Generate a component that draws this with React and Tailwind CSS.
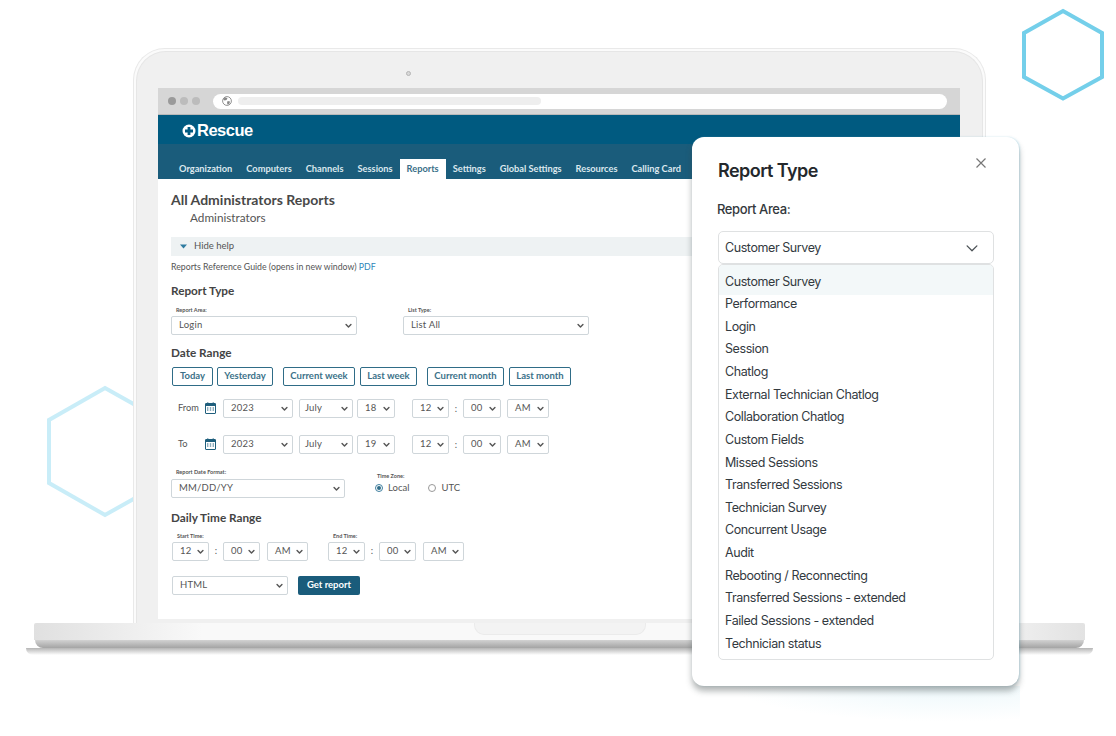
import React from "react";

const tabs = ["Organization", "Computers", "Channels", "Sessions", "Reports", "Settings", "Global Settings", "Resources", "Calling Card"];
const items = ["Customer Survey", "Performance", "Login", "Session", "Chatlog", "External Technician Chatlog", "Collaboration Chatlog", "Custom Fields", "Missed Sessions", "Transferred Sessions", "Technician Survey", "Concurrent Usage", "Audit", "Rebooting / Reconnecting", "Transferred Sessions - extended", "Failed Sessions - extended", "Technician status"];

function Chev({ size = 7, color = "#555", sw = 2 }) {
  return (
    <svg width={size} height={size} viewBox="0 0 10 10" fill="none" className="shrink-0">
      <path d="M1.5 3.5 L5 7 L8.5 3.5" stroke={color} strokeWidth={sw} strokeLinecap="round" strokeLinejoin="round" />
    </svg>
  );
}

function Sel({ children, className = "" }) {
  return (
    <div className={"h-[19px] flex items-center justify-between pl-[7px] pr-[4px] border border-[#cfd6da] rounded-[2px] bg-white text-[9.5px] tracking-[0.2px] text-[#555] shrink-0 " + className}>
      <span>{children}</span>
      <Chev />
    </div>
  );
}

function Btn({ children, className = "" }) {
  return (
    <div className={"h-[19px] flex items-center justify-center border border-[#2f6c87] rounded-[2px] text-[9.5px] font-bold text-[#3b7189] shrink-0 " + className}>{children}</div>
  );
}

function H({ children, className = "" }) {
  return <div className={"text-[11.75px] leading-[14px] font-bold text-[#444] " + className}>{children}</div>;
}

function Tiny({ children, className = "" }) {
  return <div className={"text-[5.5px] leading-[8px] font-bold text-[#555] " + className}>{children}</div>;
}

function Cal() {
  return (
    <svg width="11" height="12" viewBox="0 0 11 12" fill="none" className="shrink-0">
      <rect x="0.5" y="1.5" width="10" height="10" rx="0.5" stroke="#1f5f7d" />
      <rect x="0.5" y="1.5" width="10" height="2.5" fill="#1f5f7d" />
      <path d="M2.8 0.3v2M8.2 0.3v2" stroke="#1f5f7d" />
      <path d="M2 6h1.4M4.8 6h1.4M7.6 6h1.4M2 8h1.4M4.8 8h1.4M7.6 8h1.4" stroke="#1f5f7d" />
    </svg>
  );
}

function DateRow({ label, year, month, day, className = "" }) {
  return (
    <div className={"flex items-center text-[#555] text-[9.25px] pl-[7px] " + className}>
      <span className="w-[27px] -mt-[2px]">{label}</span>
      <span className="-mt-[2px]"><Cal /></span>
      <Sel className="w-[70px] ml-[7px]">{year}</Sel>
      <Sel className="w-[54px] ml-[6px] !pl-[5px]">{month}</Sel>
      <Sel className="w-[38px] ml-[4px]">{day}</Sel>
      <Sel className="w-[37px] ml-[17px]">12</Sel>
      <span className="w-[14px] text-center">:</span>
      <Sel className="w-[38px]">00</Sel>
      <Sel className="w-[42px] ml-[6px]">AM</Sel>
    </div>
  );
}

function Time({ className = "" }) {
  return (
    <div className={"flex items-center text-[#555] text-[9.5px] " + className}>
      <Sel className="w-[37px]">12</Sel>
      <span className="w-[14px] text-center">:</span>
      <Sel className="w-[37px]">00</Sel>
      <Sel className="w-[41px] ml-[7px]">AM</Sel>
    </div>
  );
}

function Hex({ className, points, color, sw }) {
  return (
    <svg className={className} width="130" height="140" viewBox="0 0 130 140" fill="none">
      <polygon points={points} stroke={color} strokeWidth={sw} />
    </svg>
  );
}

export default function App() {
  return (
    <div className="relative w-[1116px] h-[736px] bg-white overflow-hidden flex flex-col [font-family:Lato,sans-serif]">
      <Hex className="absolute left-[1000px] top-0" points="63,11 102,33 102,77 63,98.5 24,77 24,33" color="#74cfea" sw="4" />
      <Hex className="absolute left-[40px] top-[380px]" points="65,8 122,40 122,103 65,135 9,103 9,40" color="#c9edf8" sw="4" />
      {/* Glow under dialog */}
      <div className="absolute left-[730px] top-[686px] w-[290px] h-[36px] bg-[radial-gradient(ellipse_at_75%_0%,#edf8fb_0%,#ffffff_70%)]" />

      {/* Lid */}
      <div className="relative ml-[133px] mt-[48px] w-[853px] h-[575px] shrink-0 rounded-t-[32px] border border-b-0 border-[#e9e9e9] bg-[#fbfbfb] pt-[2px] px-[2px]">
        <div className="h-full rounded-t-[30px] border border-b-0 border-[#e6e6e6] bg-[#f0f0f0] pt-[36px] pl-[21px] pr-[22px] pb-[4px] flex flex-col">
          <div className="h-[3px] -mt-[17px] mb-[14px] pl-[248px]">
            <div className="w-[5px] h-[5px] rounded-full border border-[#b5b5b5] bg-[#d8d8d8]" />
          </div>
          {/* Screen */}
          <div className="relative flex-1 bg-white overflow-hidden flex flex-col">
            {/* Browser bar */}
            <div className="h-[26px] shrink-0 bg-[#d6d6d6] flex items-center pl-[10px] pr-[13px]">
              <div className="w-[8px] h-[8px] rounded-full bg-[#9a9a9a]" />
              <div className="w-[8px] h-[8px] rounded-full bg-[#bcbcbc] ml-[4px]" />
              <div className="w-[8px] h-[8px] rounded-full bg-[#bcbcbc] ml-[4px]" />
              <div className="flex-1 h-[15px] rounded-full bg-white ml-[13px] flex items-center pl-[9px]">
                <svg width="10" height="10" viewBox="0 0 10 10" fill="none" className="shrink-0">
                  <circle cx="5" cy="5" r="4.4" stroke="#777" strokeWidth="0.8" />
                  <path d="M3 1.2 L5.5 2.2 L4.5 4 L2.6 4.4 L1.2 3.4 Z M5.6 5 L8 5.4 L7.4 7.8 L5.8 8.8 L5 7 Z" fill="#888" />
                </svg>
                <div className="w-[303px] h-[8px] rounded-full bg-[#eeeeee] ml-[6px]" />
              </div>
            </div>
            <div className="h-[1px] shrink-0 bg-[#b9b9b9]" />
            {/* Logo bar */}
            <div className="h-[29px] shrink-0 bg-[#005a80] flex items-center pl-[24px] pt-[2px]">
              <svg width="14" height="14" viewBox="0 0 14 14" className="shrink-0">
                <circle cx="7" cy="7" r="6.5" fill="#fff" />
                <path d="M5.6 3h2.8v2.6H11v2.8H8.4V11H5.6V8.4H3V5.6h2.6z" fill="#005a80" />
              </svg>
              <span className="text-white text-[16.5px] leading-none font-semibold tracking-[-0.5px] ml-[1px] [font-family:'Liberation_Sans',sans-serif]">Rescue</span>
            </div>
            {/* Nav */}
            <div className="h-[35px] shrink-0 bg-[#1a5c7b] flex items-end pl-[14px]">
              {tabs.map((t) => (
                <div key={t} className={"h-[20px] px-[7px] flex items-center text-[9.25px] font-bold " + (t === "Reports" ? "bg-white text-[#3a6f88]" : "text-[#dce8ee]")}>{t}</div>
              ))}
            </div>
            {/* Content */}
            <div className="relative flex-1 pl-[13px] pr-[13px] text-[#555]">
              <div className="absolute right-0 top-0 bottom-0 w-[200px] bg-gradient-to-r from-transparent to-[#edf6f9]" />
              <div className="relative">
                <div className="mt-[13px] text-[14px] leading-[16px] font-bold text-[#484848]">All Administrators Reports</div>
                <div className="mt-[3px] ml-[19px] text-[11.75px] leading-[14px] text-[#555]">Administrators</div>
                <div className="mt-[12px] h-[19px] bg-[#eef2f3] flex items-center pl-[9px] text-[9.5px] text-[#555]">
                  <svg width="7" height="5" viewBox="0 0 7 5" className="shrink-0"><path d="M0 0.5h7L3.5 4.5z" fill="#2f7ba0" /></svg>
                  <span className="ml-[7px]">Hide help</span>
                </div>
                <div className="mt-[5px] text-[8.75px] leading-[12px] text-[#555]">Reports Reference Guide (opens in new window) <span className="text-[#2f86b9]">PDF</span></div>
                <H className="mt-[11px]">Report Type</H>
                <div className="flex mt-[8px]">
                  <div>
                    <Tiny className="ml-[5px]">Report Area:</Tiny>
                    <Sel className="w-[186px] mt-[2px]">Login</Sel>
                  </div>
                  <div className="ml-[46px]">
                    <Tiny className="ml-[5px]">List Type:</Tiny>
                    <Sel className="w-[186px] mt-[2px]">List All</Sel>
                  </div>
                </div>
                <H className="mt-[11px]">Date Range</H>
                <div className="flex mt-[7px] ml-[1px]">
                  <Btn className="w-[41px]">Today</Btn>
                  <Btn className="w-[56px] ml-[4px]">Yesterday</Btn>
                  <Btn className="w-[72px] ml-[10px]">Current week</Btn>
                  <Btn className="w-[57px] ml-[5px]">Last week</Btn>
                  <Btn className="w-[77px] ml-[10px]">Current month</Btn>
                  <Btn className="w-[62px] ml-[5px]">Last month</Btn>
                </div>
                <DateRow label="From" year="2023" month="July" day="18" className="mt-[13px]" />
                <DateRow label="To" year="2023" month="July" day="19" className="mt-[17px]" />
                <div className="flex mt-[14px]">
                  <div>
                    <Tiny className="ml-[5px]">Report Date Format:</Tiny>
                    <Sel className="w-[174px] mt-[3px]">MM/DD/YY</Sel>
                  </div>
                  <div className="ml-[32px] pt-[4px]">
                    <Tiny>Time Zone:</Tiny>
                    <div className="flex items-center mt-[2px] text-[9.5px] text-[#555] h-[12px]">
                      <span className="w-[8px] h-[8px] ml-[-2px] rounded-full border border-[#3f7fa0] flex items-center justify-center"><span className="w-[4px] h-[4px] rounded-full bg-[#2f6c87]" /></span>
                      <span className="ml-[5px]">Local</span>
                      <span className="w-[8px] h-[8px] ml-[19px] rounded-full border border-[#999]" />
                      <span className="ml-[5px]">UTC</span>
                    </div>
                  </div>
                </div>
                <H className="mt-[13px]">Daily Time Range</H>
                <div className="flex mt-[7px] ml-[1px]">
                  <div>
                    <Tiny className="ml-[5px]">Start Time:</Tiny>
                    <Time className="mt-[2px]" />
                  </div>
                  <div className="ml-[20px]">
                    <Tiny className="ml-[5px]">End Time:</Tiny>
                    <Time className="mt-[2px]" />
                  </div>
                </div>
                <div className="flex mt-[15px] ml-[1px]">
                  <Sel className="w-[116px]">HTML</Sel>
                  <div className="w-[62px] h-[19px] ml-[10px] rounded-[2px] bg-[#1a5c7b] flex items-center justify-center text-[9.5px] font-bold text-white">Get report</div>
                </div>
              </div>
            </div>
          </div>
        </div>
      </div>

      {/* Base */}
      <div className="relative ml-[34px] w-[1051px] h-[25px] shrink-0">
        <div className="h-[17px] rounded-t-[2px] bg-[linear-gradient(90deg,#e0e0e0,#f9f9f9_16%,#f9f9f9_88%,#e2e2e2)]">
          <div className="ml-[440px] w-[172px] h-[12px] rounded-b-[10px] bg-[#f3f3f3] border border-t-0 border-[#ebebeb]" />
        </div>
        <div className="h-[8px] mx-[1px] rounded-b-[16px] bg-gradient-to-b from-[#d2d2d2] to-[#a4a4a4]" />
        <div className="absolute left-[-8px] right-[-8px] top-[25px] h-[7px] bg-gradient-to-b from-[#b5b5b5] to-transparent rounded-b-full" />
      </div>

      {/* Dialog */}
      <div className="absolute left-[692px] top-[137px] w-[327px] h-[549px] bg-white rounded-[12px] shadow-[0_5px_6px_rgba(60,70,70,0.4),1px_0_2px_rgba(130,200,225,0.35)] [font-family:Inter,sans-serif] pl-[26px] pr-[25px]">
        <button className="absolute right-[32px] top-[20px] text-[#777]">
          <svg width="12" height="12" viewBox="0 0 12 12" fill="none"><path d="M1.5 1.5 L10.5 10.5 M10.5 1.5 L1.5 10.5" stroke="#777" strokeWidth="1.2" /></svg>
        </button>
        <div className="pt-[22px] text-[18px] leading-[24px] font-semibold tracking-[-0.55px] text-[#24282c]">Report Type</div>
        <div className="mt-[18px] -ml-[1px] text-[13px] leading-[16px] font-medium tracking-[-0.4px] text-[#33383c]">Report Area:</div>
        <div className="mt-[14px] h-[33px] border border-[#dfe1e2] rounded-[5px] flex items-center justify-between pl-[6px] pr-[14px] pt-[1px] text-[12.5px] tracking-[-0.42px] text-[#333a3f]">
          <span>Customer Survey</span>
          <Chev size={14} color="#4a5054" sw={0.9} />
        </div>
        <div className="h-[396px] border border-[#dfe1e2] rounded-[5px] text-[12.5px] tracking-[-0.42px] leading-[22.625px] text-[#333a3f] overflow-hidden">
          {items.map((t, i) => (
            <div key={i} className={"pl-[6px] " + (i === 0 ? "bg-[#f3f8f9] pt-[5.6px] pb-[1.4px] -mb-[1.4px]" : "relative")}>{t}</div>
          ))}
        </div>
      </div>
    </div>
  );
}
